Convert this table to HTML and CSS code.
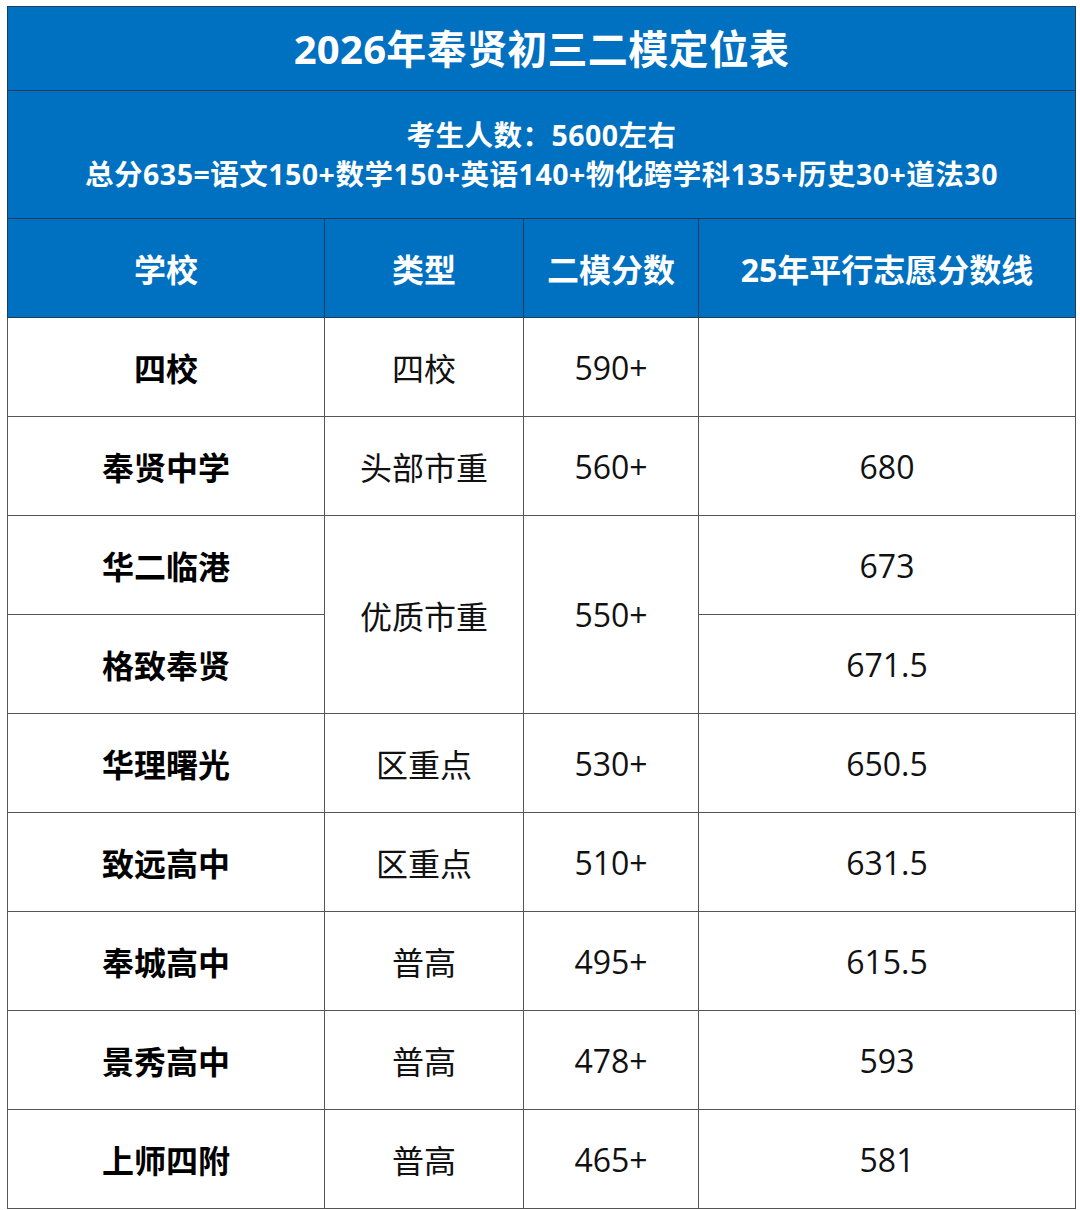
FILE: index.html
```html
<!DOCTYPE html>
<html lang="zh-CN">
<head>
<meta charset="utf-8">
<title>2026年奉贤初三二模定位表</title>
<link rel="stylesheet" href="styles.css">
</head>
<body>
<table class="grid">
  <colgroup>
    <col class="c1"><col class="c2"><col class="c3"><col class="c4">
  </colgroup>
  <thead>
    <tr class="title-row"><th colspan="4" class="title">2026年奉贤初三二模定位表</th></tr>
    <tr class="info-row"><th colspan="4" class="info">考生人数：5600左右<br>总分635=语文150+数学150+英语140+物化跨学科135+历史30+道法30</th></tr>
    <tr class="head-row"><th>学校</th><th>类型</th><th>二模分数</th><th>25年平行志愿分数线</th></tr>
  </thead>
  <tbody>
    <tr><td class="school">四校</td><td>四校</td><td>590+</td><td></td></tr>
    <tr><td class="school">奉贤中学</td><td>头部市重</td><td>560+</td><td>680</td></tr>
    <tr><td class="school">华二临港</td><td rowspan="2">优质市重</td><td rowspan="2">550+</td><td>673</td></tr>
    <tr><td class="school">格致奉贤</td><td>671.5</td></tr>
    <tr><td class="school">华理曙光</td><td>区重点</td><td>530+</td><td>650.5</td></tr>
    <tr><td class="school">致远高中</td><td>区重点</td><td>510+</td><td>631.5</td></tr>
    <tr><td class="school">奉城高中</td><td>普高</td><td>495+</td><td>615.5</td></tr>
    <tr><td class="school">景秀高中</td><td>普高</td><td>478+</td><td>593</td></tr>
    <tr><td class="school">上师四附</td><td>普高</td><td>465+</td><td>581</td></tr>
  </tbody>
</table>
</body>
</html>
```
FILE: styles.css
```css
html, body {
  margin: 0;
  padding: 0;
  background: #ffffff;
}
body {
  padding: 6px 0 0 7px;
  font-family: "Open Sans", "Noto Sans CJK SC", sans-serif;
}
.grid {
  border-collapse: collapse;
  table-layout: fixed;
  width: 1068px;
}
.c1 { width: 317px; }
.c2 { width: 199px; }
.c3 { width: 175px; }
.c4 { width: 377px; }
.grid th {
  background: #0070c0;
  color: #ffffff;
  font-weight: 700;
  border: 1.5px solid #1d3b5c;
  text-align: center;
  padding: 0;
}
.title-row { height: 84px; }
.title {
  font-size: 40px;
  line-height: 1;
  letter-spacing: 0.3px;
}
.info-row { height: 128px; }
.info {
  font-size: 28.5px;
  line-height: 39px;
  letter-spacing: 0.5px;
}
.head-row { height: 99px; }
.head-row th {
  font-size: 32px;
}
.grid td {
  height: 98px;
  border: 1.5px solid #555555;
  text-align: center;
  font-size: 32px;
  color: #111111;
  padding: 0;
}
.grid td.school {
  font-weight: 700;
  color: #000000;
}
```
